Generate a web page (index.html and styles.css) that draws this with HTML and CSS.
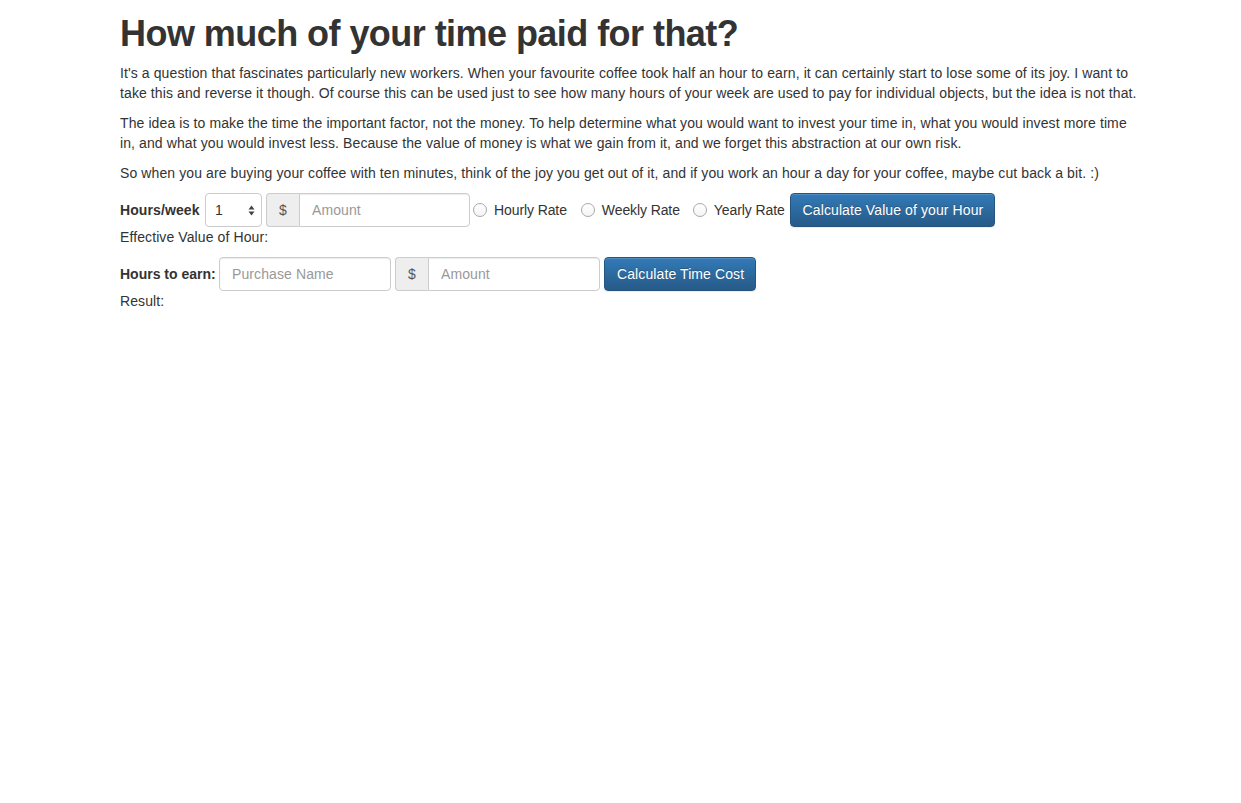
FILE: index.html
```html
<!DOCTYPE html>
<html>
<head>
<meta charset="utf-8">
<title>How much of your time paid for that?</title>
<link rel="stylesheet" href="styles.css">
</head>
<body>
<div class="container">
  <h1 class="title">How much of your time paid for that?</h1>
  <p>It's a question that fascinates particularly new workers. When your favourite coffee took half an hour to earn, it can certainly start to lose some of its joy. I want to take this and reverse it though. Of course this can be used just to see how many hours of your week are used to pay for individual objects, but the idea is not that.</p>
  <p>The idea is to make the time the important factor, not the money. To help determine what you would want to invest your time in, what you would invest more time in, and what you would invest less. Because the value of money is what we gain from it, and we forget this abstraction at our own risk.</p>
  <p>So when you are buying your coffee with ten minutes, think of the joy you get out of it, and if you work an hour a day for your coffee, maybe cut back a bit. :)</p>

  <div class="form-row">
    <label class="row-label label-week">Hours/week</label>
    <div class="select-box">
      <span class="select-value">1</span>
      <svg class="select-arrows" width="7" height="11" viewBox="0 0 7 11"><path d="M0.5 4.5 L3.5 0.5 L6.5 4.5 Z" fill="#444"/><path d="M0.5 6.5 L3.5 10.5 L6.5 6.5 Z" fill="#444"/></svg>
    </div>
    <div class="input-group ig-wide">
      <span class="addon">$</span>
      <input class="form-control grouped" type="text" placeholder="Amount">
    </div>
    <label class="radio radio-hourly"><span class="radio-circle"></span>Hourly Rate</label>
    <label class="radio radio-weekly"><span class="radio-circle"></span>Weekly Rate</label>
    <label class="radio radio-yearly"><span class="radio-circle"></span>Yearly Rate</label>
    <button class="btn btn-primary btn-hour">Calculate Value of your Hour</button>
  </div>
  <div class="result-line">Effective Value of Hour:</div>

  <div class="form-row second">
    <label class="row-label label-earn">Hours to earn:</label>
    <input class="form-control name-input" type="text" placeholder="Purchase Name">
    <div class="input-group ig-narrow">
      <span class="addon">$</span>
      <input class="form-control grouped" type="text" placeholder="Amount">
    </div>
    <button class="btn btn-primary btn-time">Calculate Time Cost</button>
  </div>
  <div class="result-line">Result:</div>
</div>
</body>
</html>
```
FILE: styles.css
```css
* { box-sizing: border-box; }
html, body {
  margin: 0;
  padding: 0;
  background: #fff;
}
body {
  font-family: "Liberation Sans", Arial, sans-serif;
  font-size: 14px;
  line-height: 20px;
  letter-spacing: 0.1px;
  color: #333;
}
.container {
  width: 1138px;
  padding-left: 120px;
}
.title {
  font-size: 36px;
  line-height: 40px;
  font-weight: 700;
  margin: 14px 0 9px;
  letter-spacing: -0.55px;
}
p {
  margin: 0 0 10px;
}
.form-row {
  display: flex;
  align-items: center;
  height: 34px;
}
.form-row.second {
  margin-top: 10px;
}
.row-label {
  font-weight: 700;
  margin-right: 4px;
  flex: none;
  white-space: nowrap;
}
.label-week { width: 81px; }
.label-earn { width: 95px; letter-spacing: 0; }
.select-box {
  width: 57px;
  height: 34px;
  border: 1px solid #ccc;
  border-radius: 4px;
  display: flex;
  align-items: center;
  justify-content: space-between;
  padding: 0 6px 0 9px;
  background: #fff;
  margin-right: 4px;
}
.select-value { color: #333; }
.input-group {
  display: flex;
  height: 34px;
  margin-right: 4px;
}
.ig-wide { width: 204px; margin-right: 3px; }
.ig-narrow { width: 205px; }
.addon {
  width: 33px;
  flex: none;
  display: flex;
  align-items: center;
  justify-content: center;
  background: #eee;
  border: 1px solid #ccc;
  border-right: 0;
  border-radius: 4px 0 0 4px;
  color: #555;
}
.form-control {
  height: 34px;
  padding: 6px 12px;
  font-family: inherit;
  font-size: 14px;
  line-height: 20px;
  letter-spacing: 0.1px;
  color: #555;
  background: #fff;
  border: 1px solid #ccc;
  border-radius: 4px;
  box-shadow: inset 0 1px 1px rgba(0,0,0,.075);
  outline: none;
  margin: 0;
}
.form-control::placeholder { color: #999; }
.form-control.grouped {
  flex: 1;
  min-width: 0;
  border-radius: 0 4px 4px 0;
}
.name-input {
  width: 172px;
  margin-right: 4px;
}
.radio {
  display: flex;
  align-items: center;
  flex: none;
  white-space: nowrap;
  color: #333;
  letter-spacing: -0.1px;
}
.radio-hourly { margin-right: 14px; }
.radio-weekly { margin-right: 13px; }
.radio-yearly { margin-right: 5px; }
.radio-circle {
  width: 14px;
  height: 14px;
  border: 1px solid #a9a9a9;
  border-radius: 50%;
  background: linear-gradient(#fff, #f4f4f4);
  margin-right: 7px;
}
.btn {
  height: 34px;
  padding: 6px 12px;
  font-family: inherit;
  font-size: 14px;
  line-height: 20px;
  letter-spacing: 0.1px;
  border-radius: 4px;
  cursor: pointer;
  white-space: nowrap;
}
.btn-primary {
  color: #fff;
  background: linear-gradient(to bottom, #337ab7 0%, #265a88 100%);
  border: 1px solid #245580;
  text-shadow: 0 -1px 0 rgba(0,0,0,.2);
  box-shadow: inset 0 1px 0 rgba(255,255,255,.15), 0 1px 1px rgba(0,0,0,.075);
}
.btn-hour { width: 205px; flex: none; }
.btn-time { width: 152px; flex: none; }
.result-line {
  line-height: 20px;
}
```
